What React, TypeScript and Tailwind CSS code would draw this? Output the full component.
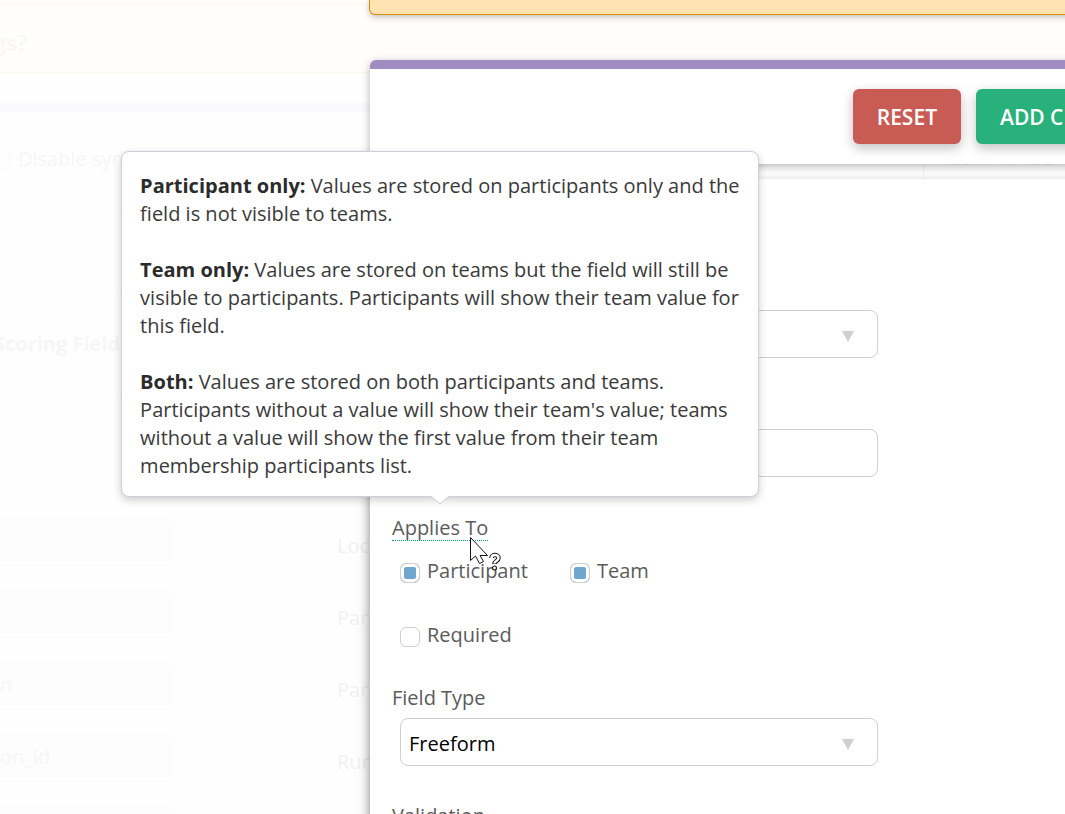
import type { ReactNode } from "react";

const MAPPING_ROWS = [
  { value: "", label: "Loc" },
  { value: "", label: "Part" },
  { value: "n", label: "Part" },
  { value: "on_id", label: "Run" },
  { value: "", label: "" },
];

const HELP_ITEMS = [
  {
    term: "Participant only:",
    text: "Values are stored on participants only and the field is not visible to teams.",
  },
  {
    term: "Team only:",
    text: "Values are stored on teams but the field will still be visible to participants. Participants will show their team value for this field.",
  },
  {
    term: "Both:",
    text: "Values are stored on both participants and teams. Participants without a value will show their team's value; teams without a value will show the first value from their team membership participants list.",
  },
];

function PageBehind() {
  return (
    <div className="absolute inset-0 overflow-hidden text-[#f6f6f6]" aria-hidden="true">
      <div className="mt-[3px] flex h-[70px] items-center border-y border-[#fdf8ec] bg-[#fffefa] pt-2 text-[22px] font-semibold text-[#f7f7f3]">
        <span className="-ml-1.5">gs?</span>
      </div>
      <div className="mt-[30px] h-[9px] bg-[#fafafc]" />
      <div className="flex h-[98px] items-center border-b border-[#fbfbfb] pb-1">
        <span className="-ml-2.5 mr-2 h-5 w-5 rounded-md border border-[#fafafa]" />
        <span>Disable syn</span>
        <span className="ml-auto mr-3 h-[98px] w-[130px] whitespace-nowrap border-l border-[#eff5f3] pl-6 pt-8 text-[22px] text-[#eef2f1]">
          EDIT RACE
        </span>
      </div>
      <div className="mt-[83px] border-y border-[#fdfdfd] py-9 font-bold leading-7">
        <span className="-ml-1.5">Scoring Field</span>
      </div>
      <div className="mt-[122px] flex flex-col gap-6">
        {MAPPING_ROWS.map((row, i) => (
          <div key={i} className="flex items-center">
            <div className="flex h-12 w-[173px] items-center rounded-r-md border border-l-0 border-[#fbfbfb] bg-[#fdfdfd]">
              {row.value}
            </div>
            <span className="ml-[164px] pt-2.5 text-[#f1f1f1]">{row.label}</span>
          </div>
        ))}
      </div>
    </div>
  );
}

function SelectBox({ id, label, children }: { id: string; label?: string; children?: ReactNode }) {
  return (
    <div className="relative ml-2 h-12 w-[478px]">
      <select
        id={id}
        aria-label={label}
        className="h-full w-full appearance-none rounded-lg border border-[#cfcfcf] bg-white px-2 pt-1 text-black"
      >
        {children}
      </select>
      <svg
        className="pointer-events-none absolute right-6 top-[21px] h-[11px] w-3 fill-[#cfcfcf]"
        viewBox="0 0 12 11"
      >
        <path d="M0 0h12L6 11z" />
      </svg>
    </div>
  );
}

function Checkbox({ label, checked = false }: { label: string; checked?: boolean }) {
  return (
    <label className="ml-2 flex w-[162px] items-center gap-[7px]">
      <input
        type="checkbox"
        defaultChecked={checked}
        className="mt-1 h-5 w-5 appearance-none rounded-md border border-[#cfcfcf] bg-white checked:bg-[#6fa6cd] checked:shadow-[inset_0_0_0_3px_white]"
      />
      {label}
    </label>
  );
}

function HelpTooltip() {
  return (
    <div
      role="tooltip"
      className="absolute bottom-full left-1/2 mb-[17px] w-[638px] -translate-x-1/2 rounded-lg border border-[#cdcfdb] bg-white pb-4 pl-[18px] pr-3 pt-5 text-[#3a3a3a] shadow-[0_3px_8px_rgba(0,0,0,0.2)]"
    >
      <div className="flex flex-col gap-7">
        {HELP_ITEMS.map(({ term, text }) => (
          <p key={term}>
            <strong className="font-bold text-[#2b2b2b]">{term}</strong> {text}
          </p>
        ))}
      </div>
      <svg className="absolute left-1/2 top-full h-[9px] w-[18px] -translate-x-1/2" viewBox="0 0 18 9">
        <path d="M0-1v1l9 8 9-8v-1z" fill="#fff" />
        <path d="M0 0l9 8 9-8" fill="none" stroke="#cdcfdb" />
      </svg>
    </div>
  );
}

function HelpCursor() {
  return (
    <svg className="pointer-events-none absolute left-[78px] top-[23px] z-10 h-[34px] w-8" viewBox="0 0 32 34">
      <path d="M.5.5v23l5-4.5 4 7.5 4-2-3.500-6h7.500z" fill="#fff" stroke="#14141f" />
      <path d="M21.500 21c0-4 7-4 7 0 0 3-4 3-4 6" fill="none" stroke="#14141f" strokeWidth="4.500" />
      <circle cx="24.500" cy="31" r="2.500" fill="#14141f" />
      <path d="M21.500 21c0-4 7-4 7 0 0 3-4 3-4 5.500" fill="none" stroke="#fff" strokeWidth="2.500" />
      <circle cx="24.500" cy="31" r="1.400" fill="#fff" />
    </svg>
  );
}

export default function App() {
  return (
    <div className="relative h-screen overflow-hidden bg-[#fefefe] font-['Open_Sans','Noto_Sans',sans-serif] text-xl leading-7">
      <PageBehind />

      <main className="relative -mr-[100px] ml-[370px] text-[#5b5b5b]">
        <div className="-ml-px h-[15px] rounded-b-md border border-t-0 border-[#d98e0b] bg-[#ffe3b1] shadow-[0_2px_6px_rgba(0,0,0,0.25)]" />

        <header className="mt-[45px] flex h-[104px] items-start justify-end gap-[15px] rounded-t-md border-t-[9px] border-[#a18cc2] bg-white pr-[29px] pt-5 shadow-[0_2px_8px_rgba(0,0,0,0.3)]">
          <button className="h-[55px] rounded-md bg-[#c95b55] px-6 text-[21px] font-semibold text-white shadow-[0_4px_12px_rgba(0,0,0,0.25)]">
            RESET
          </button>
          <button className="h-[55px] w-40 rounded-md bg-[#28b17b] px-6 text-left text-[21px] font-semibold text-white shadow-[0_4px_12px_rgba(0,0,0,0.25)]">
            ADD C
          </button>
        </header>

        <form className="mt-[15px] bg-white pl-[22px] pt-[131px] shadow-[0_6px_11px_rgba(0,0,0,0.5)]">
          <SelectBox id="source" label="Source" />
          <input
            type="text"
            aria-label="Field name"
            className="ml-2 mt-[71px] block h-12 w-[478px] rounded-lg border border-[#cfcfcf] bg-white px-2"
          />

          <div className="relative mt-[37px] h-[27px] w-fit cursor-help border-b border-dotted border-b-[#00a86b]">
            Applies To
            <HelpTooltip />
            <HelpCursor />
          </div>
          <div className="mt-4 flex">
            <Checkbox label="Participant" checked />
            <Checkbox label="Team" checked />
          </div>
          <div className="mt-9">
            <Checkbox label="Required" />
          </div>

          <label htmlFor="field-type" className="mb-[6px] mt-[35px] block">
            Field Type
          </label>
          <SelectBox id="field-type">
            <option>Freeform</option>
          </SelectBox>

          <div className="mt-9 pb-8">Validation</div>
        </form>
      </main>
    </div>
  );
}
